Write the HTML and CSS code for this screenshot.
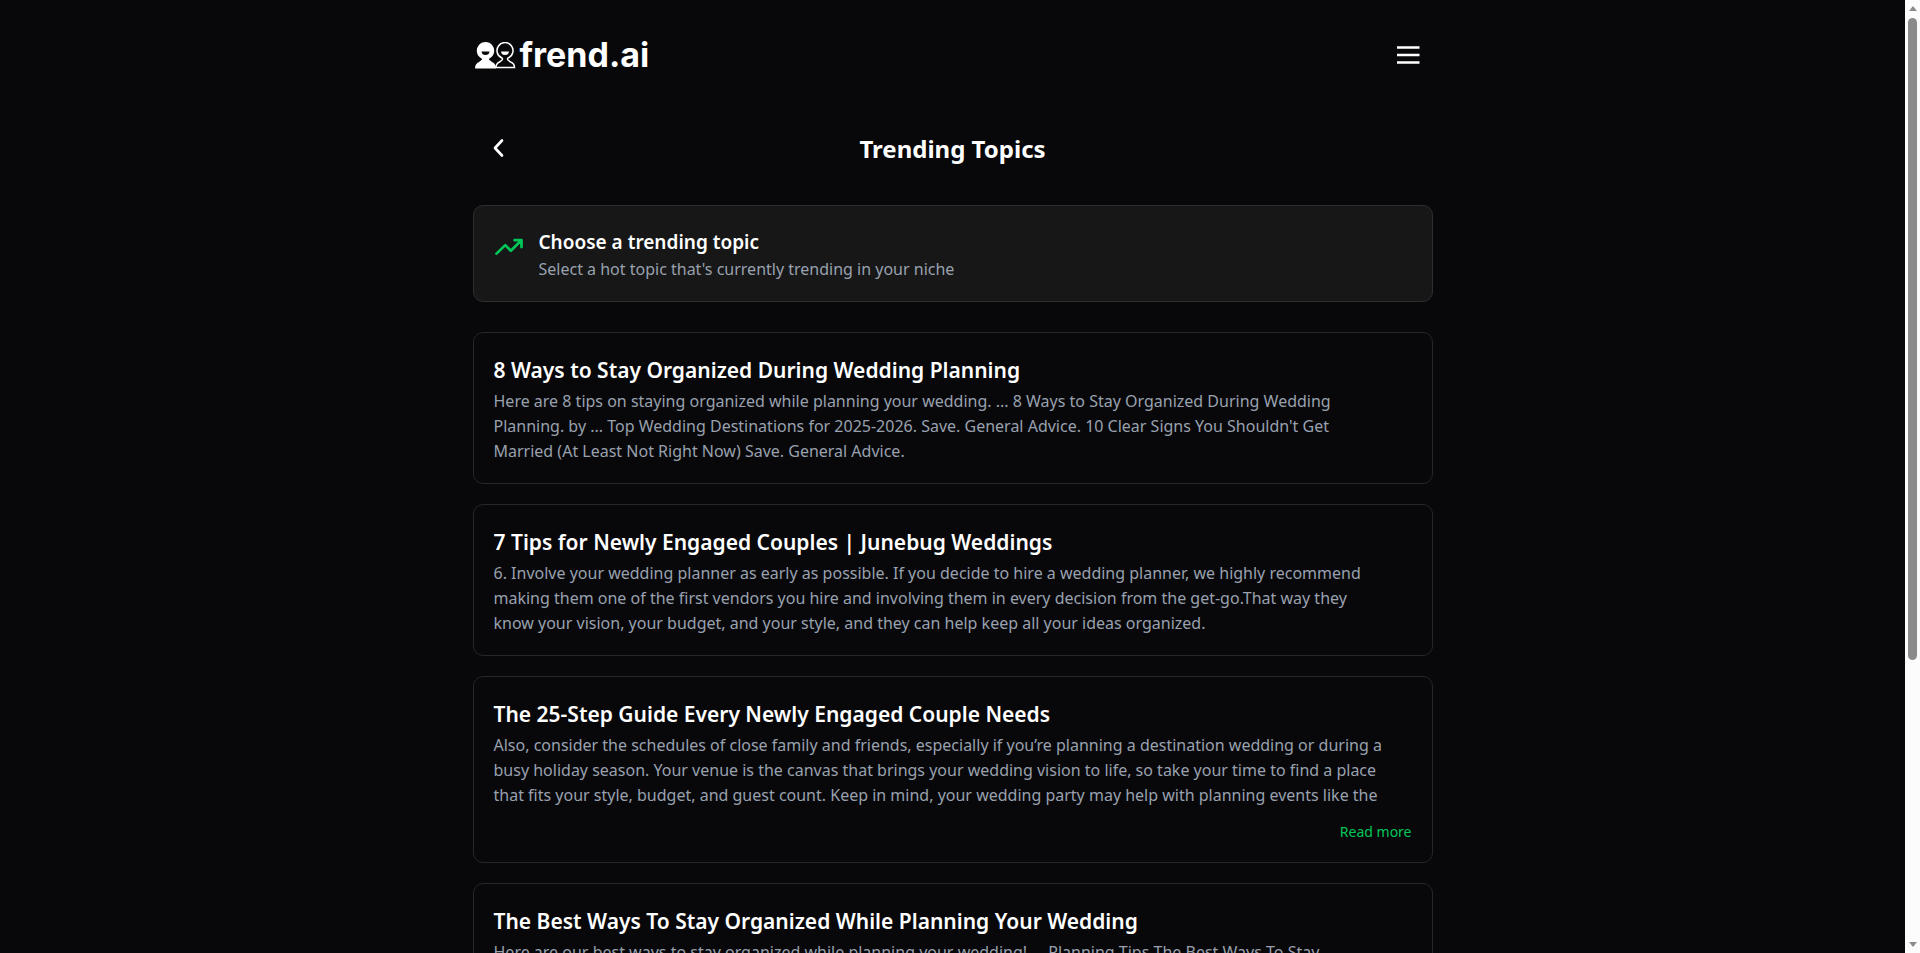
FILE: index.html
```html
<!DOCTYPE html>
<html lang="en">
<head>
    <meta charset="UTF-8">
    <meta name="viewport" content="width=device-width, initial-scale=1.0">
    <title>Trending Topics - frend.ai</title>
    <link rel="stylesheet" href="styles.css">
</head>
<body>

    <div class="page">
        <header class="header">
            <a href="#" class="logo">
                <svg class="logo-icon" viewBox="0 0 41 27" aria-hidden="true">
                    <path d="M21 25.500q0-4 3.500-5.500l2.500-2q1-1 0-2a8 8 0 1 1 6 0q-1 1 0 2l2.500 2q4 1.500 4 5.500z" fill="#08080a" stroke="#fff" stroke-width="1.500"/>
                    <path d="M26 9.500h8q-.5 3.500-4 3.500t-4-3.500z" fill="#fff"/>
                    <path d="M0 26.500q0-5 4-6.500l2.500-2q1-1 0-1.500a8.700 8.700 0 1 1 8 0q-1 .5 0 1.500l2.500 2q4 1.500 4 6.500z" fill="#fff"/>
                    <path d="M6.500 9.500h8q-.5 3.500-4 3.500t-4-3.500z" fill="#08080a"/>
                </svg>
                <span class="logo-text">frend.ai</span>
            </a>
            <button class="icon-button" type="button" aria-label="Menu">
                <svg width="30" height="30" viewBox="0 0 30 30" fill="none" stroke="#fff" stroke-width="2.500">
                    <path d="M4 7.500h22.500M4 15h22.500M4 22.500h22.500"/>
                </svg>
            </button>
        </header>

        <main>
            <div class="title-bar">
                <button class="icon-button" type="button" aria-label="Back">
                    <svg width="30" height="30" viewBox="0 0 30 30" fill="none" stroke="#fff" stroke-width="2.700" stroke-linecap="round" stroke-linejoin="round">
                        <path d="M19 7.500L12 15l7 7.500"/>
                    </svg>
                </button>
                <h1>Trending Topics</h1>
            </div>

            <section class="intro">
                <svg class="intro-icon" width="30" height="30" viewBox="0 0 24 24" fill="none" stroke="#00c758" stroke-width="2.200" stroke-linecap="round" stroke-linejoin="round">
                    <path d="M16.500 6.500h5.500v5.500M22 6.500l-8.500 8.500-4.500-4.500L2 17.300"/>
                </svg>
                <div>
                    <h2>Choose a trending topic</h2>
                    <p>Select a hot topic that's currently trending in your niche</p>
                </div>
            </section>

            <div class="topics">
                <article class="topic">
                    <h3>8 Ways to Stay Organized During Wedding Planning</h3>
                    <p>Here are 8 tips on staying organized while planning your wedding. ... 8 Ways to Stay Organized During Wedding<br>
                    Planning. by ... Top Wedding Destinations for 2025-2026. Save. General Advice. 10 Clear Signs You Shouldn't Get<br>
                    Married (At Least Not Right Now) Save. General Advice.</p>
                </article>
                <article class="topic">
                    <h3>7 Tips for Newly Engaged Couples | Junebug Weddings</h3>
                    <p>6. Involve your wedding planner as early as possible. If you decide to hire a wedding planner, we highly recommend<br>
                    making them one of the first vendors you hire and involving them in every decision from the get-go.That way they<br>
                    know your vision, your budget, and your style, and they can help keep all your ideas organized.</p>
                </article>
                <article class="topic">
                    <h3>The 25-Step Guide Every Newly Engaged Couple Needs</h3>
                    <p>Also, consider the schedules of close family and friends, especially if you’re planning a destination wedding or during a<br>
                    busy holiday season. Your venue is the canvas that brings your wedding vision to life, so take your time to find a place<br>
                    that fits your style, budget, and guest count. Keep in mind, your wedding party may help with planning events like the</p>
                    <button class="read-more" type="button">Read more</button>
                </article>
                <article class="topic">
                    <h3>The Best Ways To Stay Organized While Planning Your Wedding</h3>
                    <p>Here are our best ways to stay organized while planning your wedding! ... Planning Tips The Best Ways To Stay</p>
                </article>
            </div>
        </main>
    </div>

    <!-- Scrollbar -->
    <div class="scrollbar" aria-hidden="true">
        <span class="arrow arrow-up"></span>
        <span class="track"><span class="thumb"></span></span>
        <span class="arrow arrow-down"></span>
    </div>

</body>
</html>
```
FILE: styles.css
```css
* {
    box-sizing: border-box;
    margin: 0;
    padding: 0;
}
body {
    background-color: #08080a;
    color: #fff;
    font-family: "Segoe UI", "Noto Sans", sans-serif;
    font-size: 16px;
    line-height: 25px;
    height: 100vh;
    display: flex;
    overflow: hidden;
}
button {
    background: none;
    border: none;
    font-family: inherit;
    cursor: pointer;
}
.page {
    flex: 1;
    overflow: hidden;
}

/* Header */
.header,
main {
    width: 100%;
    max-width: 960px;
    margin: 0 auto;
}
.header {
    display: flex;
    align-items: center;
    justify-content: space-between;
    height: 110px;
    padding: 0 10px 0 2px;
}
.logo {
    display: flex;
    align-items: center;
    gap: 4px;
    color: #fff;
    text-decoration: none;
}
.logo-icon {
    width: 41px;
    height: 27px;
}
.logo-text {
    font-family: Inter, sans-serif;
    font-size: 34px;
    font-weight: 700;
    line-height: 40px;
}
.icon-button {
    display: flex;
    width: 30px;
    height: 30px;
}

/* Title row */
.title-bar {
    display: grid;
    grid-template-columns: 30px 1fr 30px;
    align-items: center;
    height: 76px;
    padding: 0 10px;
}
.title-bar h1 {
    font-size: 24px;
    font-weight: 700;
    text-align: center;
}

.intro {
    display: flex;
    gap: 15px;
    margin-top: 19px;
    padding: 24px 20px 19px;
    background-color: #171717;
    border: 1px solid #2e2e30;
    border-radius: 10px;
}
.intro-icon {
    margin-top: 2px;
}
.intro h2 {
    margin-bottom: 2px;
    font-size: 19px;
    font-weight: 600;
}
.intro p,
.topic p {
    color: #99a1af;
}

/* Topic cards */
.topics {
    display: flex;
    flex-direction: column;
    gap: 20px;
    margin-top: 30px;
}
.topic {
    padding: 22px 20px 19px;
    border: 1px solid #262628;
    border-radius: 10px;
}
.topic h3 {
    margin-bottom: 4px;
    font-size: 21px;
    font-weight: 600;
    line-height: 30px;
}
.read-more {
    display: block;
    margin: 12px 0 0 auto;
    color: #00c758;
    font-size: 14px;
    line-height: 23px;
}

/* Scrollbar */
.scrollbar {
    display: flex;
    flex-direction: column;
    align-items: center;
    justify-content: space-between;
    width: 15px;
    padding: 6px 0;
    background-color: #fcfcfc;
}
.track {
    flex: 1;
    width: 9px;
    margin: 7px 0;
}
.thumb {
    display: block;
    height: 70%;
    background-color: #8b8b8b;
    border-radius: 5px;
}
.arrow {
    border: 4px solid transparent;
}
.arrow-up {
    border-top: 0;
    border-bottom: 5px solid #8b8b8b;
}
.arrow-down {
    border-bottom: 0;
    border-top: 5px solid #8b8b8b;
}
```
